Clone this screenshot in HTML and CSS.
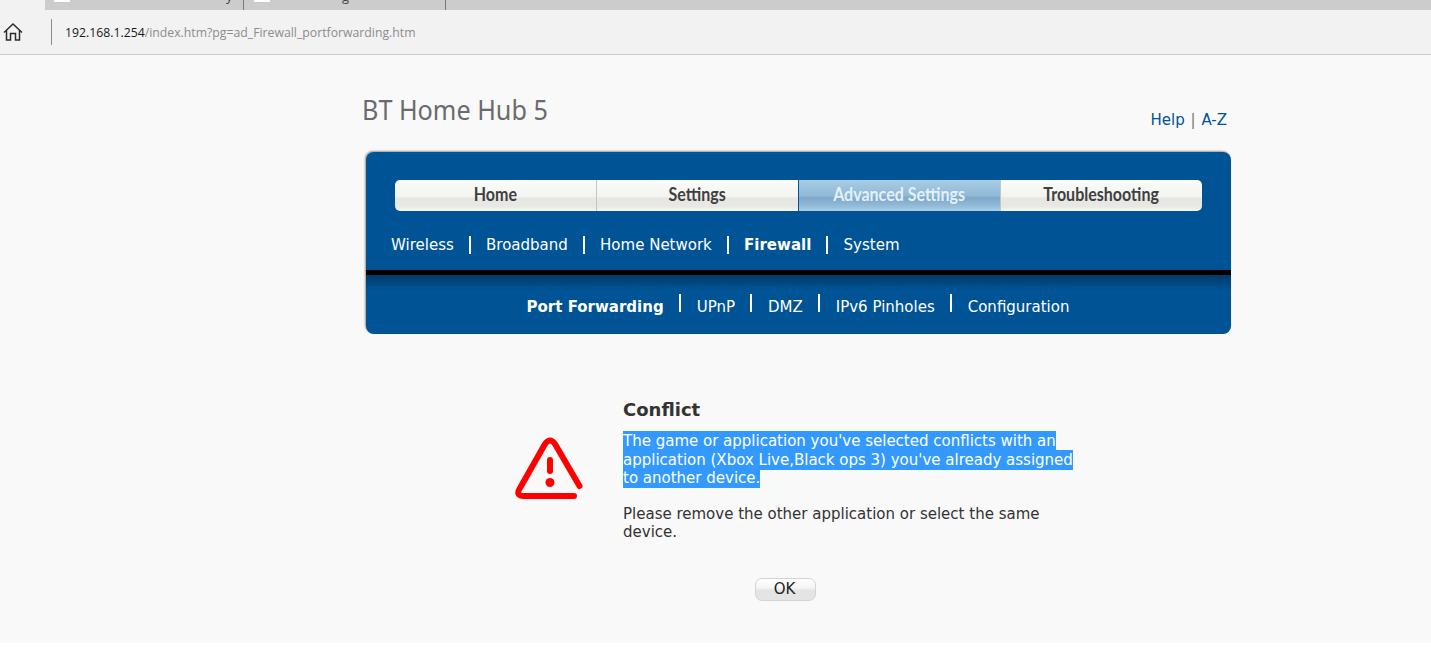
FILE: index.html
```html
<!DOCTYPE html>
<html lang="en">
<head>
  <meta charset="UTF-8" />
  <title>BT Home Hub 5</title>
  <link rel="stylesheet" href="styles.css">
</head>
<body>
  <div class="tabstrip">
    <div class="tab tab-first">
      <span class="favicon"></span>
      <span class="tab-title">y</span>
    </div>
    <div class="tab tab-second">
      <span class="favicon"></span>
      <span class="tab-title">g</span>
    </div>
  </div>

  <div class="addressbar">
    <svg class="home-icon" viewBox="0 0 20 20" width="20" height="20" fill="none" stroke="#2b2b2b" stroke-width="1.5">
      <path d="M1 10.5 L10 2 L19 10.5" />
      <path d="M3.5 8.5 V18 H7.5 V11.5 H12.5 V18 H16.5 V8.5" />
    </svg>
    <span class="addressbar-sep"></span>
    <div class="url"><span class="url-host">192.168.1.254</span>/index.htm?pg=ad_Firewall_portforwarding.htm</div>
  </div>

  <div class="page">
    <div class="wrap">
      <div class="header">
        <h1 class="title"><span>BT Home Hub 5</span></h1>
        <div class="help"><a>Help</a> <span class="help-sep">|</span> <a>A-Z</a></div>
      </div>

      <div class="nav">
        <div class="tabs">
          <a class="nav-tab"><span>Home</span></a>
          <a class="nav-tab"><span>Settings</span></a>
          <a class="nav-tab active"><span>Advanced Settings</span></a>
          <a class="nav-tab"><span>Troubleshooting</span></a>
        </div>

        <div class="menu menu-main">
          <a>Wireless</a><i></i>
          <a>Broadband</a><i></i>
          <a>Home Network</a><i></i>
          <a class="current">Firewall</a><i></i>
          <a>System</a>
        </div>

        <div class="nav-divider"></div>

        <div class="menu menu-sub">
          <a class="current">Port Forwarding</a><i></i>
          <a>UPnP</a><i></i>
          <a>DMZ</a><i></i>
          <a>IPv6 Pinholes</a><i></i>
          <a>Configuration</a>
        </div>
      </div>

      <div class="dialog">
        <svg class="warn-icon" viewBox="0 0 68 66" width="68" height="66" fill="none" stroke="#ff0000" stroke-width="6" stroke-linecap="round" stroke-linejoin="round">
          <path d="M64.5 50 L40 8 Q35 1 30 8 L5 52 Q0 60 9 60 H59" />
          <path d="M35 24 V35" />
          <circle cx="35" cy="46.5" r="4.5" fill="#ff0000" stroke="none" />
        </svg>
        <div class="dialog-text">
          <h2>Conflict</h2>
          <p><span class="selected">The game or application you've selected conflicts with an application (Xbox Live,Black ops 3) you've already assigned to another device.</span></p>
          <p>Please remove the other application or select the same device.</p>
        </div>
      </div>

      <div class="actions">
        <button class="ok-btn">OK</button>
      </div>
    </div>
  </div>
</body>
</html>
```

FILE: styles.css
```css
html, body {
  margin: 0;
  padding: 0;
  height: 100%;
  overflow: hidden;
  background-color: #ffffff;
  font-family: "DejaVu Sans", Verdana, sans-serif;
  color: #333333;
}

/* browser chrome */
.tabstrip {
  display: flex;
  height: 10px;
  padding-left: 45px;
  background-color: #f2f2f2;
}

.tab {
  display: flex;
  height: 10px;
  overflow: hidden;
  background-color: #cccccc;
  box-sizing: border-box;
  border-right: 1px solid #777777;
  font-family: "Open Sans", sans-serif;
  font-size: 13px;
  color: #444444;
}

.tab-first {
  width: 199px;
  padding-left: 9px;
}

.tab-second {
  width: 202px;
  padding-left: 10px;
}

.favicon {
  display: block;
  width: 16px;
  height: 2px;
  background-color: #ffffff;
}

.tab-title {
  line-height: 13px;
  margin-top: -10px;
}

.tab-first .tab-title {
  margin-left: 156px;
}

.tab-second .tab-title {
  margin-left: 72px;
}

.tabstrip::after {
  content: "";
  flex: 1;
  background-color: #cccccc;
}

.addressbar {
  display: flex;
  align-items: center;
  height: 44px;
  background-color: #f2f2f2;
  border-bottom: 1px solid #cccccc;
}

.home-icon {
  margin-left: 3px;
}

.addressbar-sep {
  width: 1px;
  height: 26px;
  margin-left: 28px;
  background-color: #8a8a8a;
}

.url {
  margin-left: 13px;
  font-family: "Open Sans", sans-serif;
  font-size: 12.25px;
  color: #8c8c8c;
}

.url-host {
  color: #1a1a1a;
}

/* page */
.page {
  height: 588px;
  background-color: #f9f9f9;
}

.wrap {
  width: 866px;
  margin-left: 365px;
}

.header {
  display: flex;
  justify-content: space-between;
  height: 97px;
}

.title {
  margin: 37px 0 0 -3px;
  font-family: "Noto Sans", sans-serif;
  font-size: 28px;
  font-weight: 400;
  line-height: 34px;
  color: #6b6b6b;
}

.title span {
  display: inline-block;
  transform: scaleX(0.9);
  transform-origin: left center;
}

.help {
  margin: 55px 4px 0 0;
  font-size: 15px;
  line-height: 20px;
  color: #005395;
}

.help-sep {
  margin: 0 1px;
  color: #777777;
}

/* blue nav panel */
.nav {
  height: 182px;
  margin-left: 1px;
  box-sizing: border-box;
  padding-top: 28px;
  background-color: #005395;
  border-radius: 8px;
  box-shadow: -1px -1px 2px #999999;
}

.tabs {
  display: flex;
  height: 31px;
  margin: 0 29px 0 29px;
  overflow: hidden;
  border-radius: 5px;
}

.nav-tab {
  flex: 1;
  font-family: "Lato", sans-serif;
  font-size: 18px;
  font-weight: 700;
  line-height: 29px;
  text-align: center;
  color: #404040;
  background: linear-gradient(#fbfbfa 0%, #f3f3f1 55%, #e6e6e2 58%, #e8e8e4 85%, #f6f6f4 100%);
  border-left: 1px solid #c4c4c0;
}

.nav-tab span {
  display: inline-block;
  transform: scaleX(0.89);
}

.nav-tab:first-child {
  border-left: none;
}

.nav-tab.active {
  color: #e4f0f8;
  background: linear-gradient(#a9cde4 0%, #8fb9d6 50%, #7da8c8 58%, #8fb8d6 80%, #a9cde4 100%);
  border-left: 1px solid #005395;
}

.menu {
  display: flex;
  align-items: center;
  gap: 15.5px;
  height: 26px;
  font-size: 15px;
  line-height: 26px;
  color: #ffffff;
}

.menu a.current {
  font-weight: 700;
}

.menu i {
  display: block;
  width: 2px;
  height: 18px;
  background-color: #ffffff;
}

.menu-main {
  gap: 15.15px;
  margin-top: 21px;
  padding-left: 25px;
}

.nav-divider {
  height: 15px;
  margin-top: 12px;
  border-top: 5px solid #000000;
  background: linear-gradient(#003a68, #005395);
}

.menu-sub {
  justify-content: center;
  margin-top: 4px;
  padding-right: 1px;
}

.menu-sub i {
  align-self: flex-start;
}

/* conflict message */
.dialog {
  display: flex;
  margin-top: 64px;
  padding-left: 150px;
}

.warn-icon {
  margin-top: 38px;
  flex-shrink: 0;
}

.dialog-text {
  width: 456px;
  margin-left: 40px;
  font-size: 15px;
  line-height: 18.5px;
}

.dialog-text h2 {
  margin: 0 0 10px 0;
  font-size: 18px;
  font-weight: 700;
  line-height: 24px;
}

.dialog-text p {
  margin: 0 0 17px 0;
}

.selected {
  padding: 1px 0;
  background-color: #3399ff;
  color: #ffffff;
}

.actions {
  margin-top: 19px;
  padding-left: 390px;
}

.ok-btn {
  display: block;
  width: 61px;
  height: 23px;
  padding: 0 2px 0 0;
  font-family: "DejaVu Sans", sans-serif;
  font-size: 15px;
  color: #222222;
  background: linear-gradient(#ffffff 0%, #f6f6f6 40%, #e4e4e4 55%, #e4e4e4 100%);
  border: 1px solid #d4d4d4;
  border-radius: 7px;
}
```
